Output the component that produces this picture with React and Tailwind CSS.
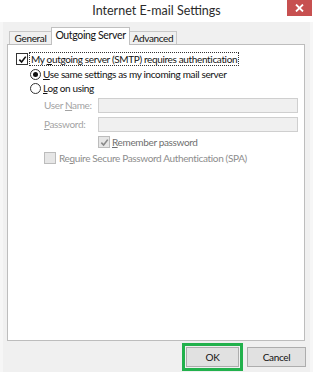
import React from 'react'

const font = { fontFamily: 'Lato, "Noto Sans", sans-serif' }

function CheckBox({ checked, disabled }) {
  return (
    <span
      className={`flex h-[12px] w-[12px] shrink-0 items-center justify-center border ${
        disabled ? 'border-[#bcbcbc] bg-[#e6e6e6]' : 'border-[#333] bg-white'
      }`}
    >
      {checked && (
        <svg width="9" height="9" viewBox="0 0 10 10">
          <path
            d="M1.5 5.2 L4 7.8 L8.6 1.8"
            fill="none"
            stroke={disabled ? '#8a8a8a' : '#111'}
            strokeWidth="1.8"
          />
        </svg>
      )}
    </span>
  )
}

function Radio({ checked }) {
  return (
    <span className="flex h-[11px] w-[11px] shrink-0 items-center justify-center rounded-full border border-[#333] bg-white">
      {checked && <span className="h-[5px] w-[5px] rounded-full bg-[#111]" />}
    </span>
  )
}

export default function App() {
  return (
    <div
      className="relative h-[372px] w-[313px] overflow-hidden whitespace-nowrap bg-white text-[10px] tracking-[-0.35px] text-[#111]"
      style={font}
    >
      {/* Title bar */}
      <div className="flex h-[22px] items-center justify-center pt-[1px] text-[12.5px] tracking-normal text-[#2b2b2b]">
        Internet E-mail Settings
      </div>
      <button className="absolute right-[1px] top-0 flex h-[16px] w-[25px] items-center justify-center bg-[#c75050] text-white">
        <svg width="9" height="8" viewBox="0 0 9 8">
          <path d="M1 0.5 L8 7.5 M8 0.5 L1 7.5" stroke="#fff" strokeWidth="1.8" />
        </svg>
      </button>

      {/* Body */}
      <div className="flex h-[350px] flex-col border-x-[3px] border-x-[#f6f6f6] bg-[#f0f0f0] pl-[4px] pr-[5px]">
        {/* Tabs */}
        <div className="mt-[5px] flex h-[17px] items-end pl-[2px]">
          <div className="-mr-px flex h-[13px] w-[43px] items-center justify-center border border-b-0 border-[#c8c8c8] bg-[#f0f0f0]">
            General
          </div>
          <div className="relative z-10 -mb-px flex h-[18px] w-[79px] items-center justify-center border border-b-0 border-[#c0c0c0] bg-white pb-[1px] text-[10.5px]">
            Outgoing Server
          </div>
          <div className="-ml-px flex h-[13px] w-[48px] items-center justify-center border border-b-0 border-[#c8c8c8] bg-[#f0f0f0]">
            Advanced
          </div>
        </div>

        {/* Panel */}
        <div className="flex h-[297px] flex-col border border-[#bdbdbd] bg-white pl-[8px] pt-[7px]">
          <div className="flex h-[14px] items-center gap-[1px]">
            <CheckBox checked />
            <span className="border border-dotted border-[#333] px-px leading-[12px]">
              My <span className="underline">o</span>utgoing server (SMTP) requires authentication
            </span>
          </div>

          <div className="ml-[14px] mt-px flex h-[14px] items-center gap-[2px]">
            <Radio checked />
            <span>
              <span className="underline">U</span>se same settings as my incoming mail server
            </span>
          </div>
          <div className="ml-[14px] flex h-[14px] items-center gap-[2px]">
            <Radio />
            <span>
              <span className="underline">L</span>og on using
            </span>
          </div>

          <div className="ml-[28px] mt-[3px] flex h-[15px] items-center text-[#a3a3a3]">
            <span className="w-[54px]">
              User <span className="underline">N</span>ame:
            </span>
            <span className="h-[15px] w-[200px] border border-[#cfcfcf] bg-[#f0f0f0]" />
          </div>
          <div className="ml-[28px] mt-[4px] flex h-[15px] items-center text-[#a3a3a3]">
            <span className="w-[54px]">
              <span className="underline">P</span>assword:
            </span>
            <span className="h-[15px] w-[200px] border border-[#cfcfcf] bg-[#f0f0f0]" />
          </div>

          <div className="ml-[82px] mt-[3px] flex h-[14px] items-center gap-[2px] text-[#6f6f6f]">
            <CheckBox checked disabled />
            <span>
              <span className="underline">R</span>emember password
            </span>
          </div>
          <div className="ml-[28px] mt-[2px] flex h-[14px] items-center gap-[3px] text-[#8d8d8d]">
            <CheckBox disabled />
            <span>
              Re<span className="underline">q</span>uire Secure Password Authentication (SPA)
            </span>
          </div>
        </div>

        {/* Buttons */}
        <div className="-mr-px mt-[2px] flex justify-end gap-[4px]">
          <div className="border-[3px] border-[#22b14c] p-[1px]">
            <button className="flex h-[20px] w-[53px] items-center justify-center border border-[#adadad] bg-[#e1e1e1]">
              OK
            </button>
          </div>
          <button className="mt-[4px] flex h-[20px] w-[59px] items-center justify-center border border-[#adadad] bg-[#e1e1e1]">
            Cancel
          </button>
        </div>
      </div>
    </div>
  )
}
